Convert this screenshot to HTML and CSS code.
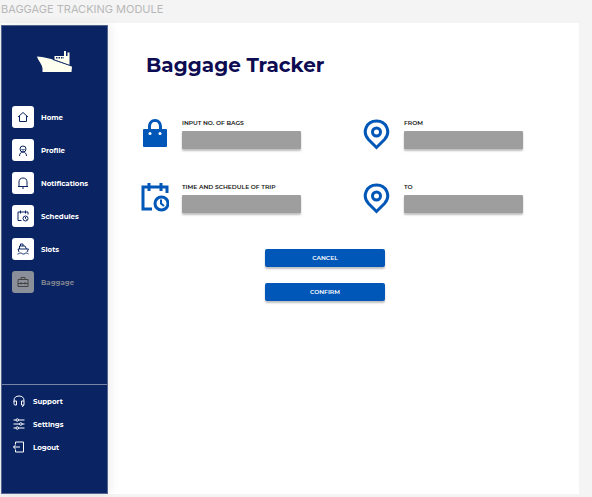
FILE: index.html
```html
<!DOCTYPE html>
<html lang="en">
<head>
<meta charset="utf-8">
<meta name="viewport" content="width=device-width, initial-scale=1">
<title>Baggage Tracker</title>
<link rel="stylesheet" href="styles.css">
</head>
<body>
<header class="frame-label">BAGGAGE TRACKING MODULE</header>
<div class="app">
  <aside class="sidebar">
    <svg class="logo" viewBox="0 0 36 22" aria-hidden="true">
      <path fill="#fffff0" d="M0 5.500C7 6 13 7.500 18 9.500L35 15.500L34.500 21H5.500V17.500C5 13 1 9.500 0 5.500Z"/>
      <path fill="#fffff0" d="M17.500 5H27V0H29V5H30.500V1.500H32.500V14L25 11.300L17.500 8.500Z"/>
      <path stroke="#0a2463" stroke-width="1.400" stroke-dasharray="1.500 1" d="M19 6.800H27"/>
      <path fill="none" stroke="#0a2463" stroke-width=".7" d="M16 8.600L34.500 15"/>
    </svg>
    <nav class="menu" aria-label="Main">
      <a class="item" href="#home"><span class="tile"><svg viewBox="0 0 24 24"><path d="M2 12L12 3L22 12M5 10V21H19V10"/></svg></span>Home</a>
      <a class="item" href="#profile"><span class="tile"><svg viewBox="0 0 24 24"><circle cx="12" cy="10" r="6"/><path d="M5 24C5 19 8 16 12 16S19 19 19 24M9 11Q12 13 15 11"/></svg></span>Profile</a>
      <a class="item" href="#notifications"><span class="tile"><svg viewBox="0 0 24 24"><path d="M2 19H22M4 19V10C4 5 7 2 12 2S20 5 20 10V19M10 22H14"/></svg></span>Notifications</a>
      <a class="item" href="#schedules"><span class="tile"><svg viewBox="0 0 24 24"><path d="M9 21H2V4H22V9M7 1V7M17 1V7"/><circle cx="17" cy="17" r="5"/><path d="M17 14V17L19 19"/></svg></span>Schedules</a>
      <a class="item" href="#slots"><span class="tile"><svg viewBox="0 0 24 24"><path d="M4 18L2 12H23L20 18M5 12V6H16L19 12M7 6V2H12V6M1 22C4 22 4 20 7 20S10 22 13 22S16 20 19 20S21 22 23 22"/></svg></span>Slots</a>
      <a class="item current" href="#baggage" aria-current="page"><span class="tile"><svg viewBox="0 0 24 24"><path d="M2 7H22V21H2ZM8 7V3H16V7M2 15H22M8 12V17M16 12V17"/></svg></span>Baggage</a>
    </nav>
    <nav class="menu-secondary" aria-label="Account">
      <a class="link" href="#support"><svg viewBox="0 0 24 24"><path d="M2 13V11C2 5 6 2 12 2S22 5 22 11V19Q22 22 18 23M2 12H7V20H4Q2 20 2 17V12M22 12H17V20H22"/></svg>Support</a>
      <a class="link" href="#settings"><svg viewBox="0 0 24 24"><path d="M1 4H6M11 4H23M1 12H13M18 12H23M1 20H6M11 20H23"/><circle cx="8.500" cy="4" r="2.500"/><circle cx="15.500" cy="12" r="2.500"/><circle cx="8.500" cy="20" r="2.500"/></svg>Settings</a>
      <a class="link" href="#logout"><svg viewBox="0 0 24 24"><path d="M5 7V2H21V22H5V17M14 12H1M5 8L1 12L5 16"/></svg>Logout</a>
    </nav>
  </aside>
  <main class="content">
    <h1>Baggage Tracker</h1>
    <form class="tracker">
      <div class="field">
        <svg viewBox="0 0 28 32" aria-hidden="true"><path fill="#0057b8" fill-rule="evenodd" d="M3 11H7V9C7 4 10 1 14 1S21 4 21 9V11H25Q26 11 26 12V28Q26 29 25 29H3Q2 29 2 28V12Q2 11 3 11ZM10 11H18V9C18 6 17 4 14 4S10 6 10 9Z"/><circle cx="9" cy="15.500" r="1.500" fill="#fff"/><circle cx="19" cy="15.500" r="1.500" fill="#fff"/></svg>
        <div class="entry"><label for="bags">INPUT NO. OF BAGS</label><input id="bags" type="text"></div>
      </div>
      <div class="field">
        <svg viewBox="0 0 28 32" aria-hidden="true"><g class="outline"><path d="M13.500 29.500L5.500 21.500C-1 14.500 3 3 13.500 3S28 14.500 21.500 21.500Z"/><circle cx="13.500" cy="14" r="4"/></g></svg>
        <div class="entry"><label for="from">FROM</label><input id="from" type="text"></div>
      </div>
      <div class="field">
        <svg viewBox="0 0 28 32" aria-hidden="true"><g class="outline"><path d="M11 27H2V5H26V11M8 1V9M20 1V9"/><circle cx="20.500" cy="21.500" r="6.500"/><path class="hands" d="M20 17.500V21.500L23 24"/></g></svg>
        <div class="entry"><label for="trip">TIME AND SCHEDULE OF TRIP</label><input id="trip" type="text"></div>
      </div>
      <div class="field">
        <svg viewBox="0 0 28 32" aria-hidden="true"><g class="outline"><path d="M13.500 29.500L5.500 21.500C-1 14.500 3 3 13.500 3S28 14.500 21.500 21.500Z"/><circle cx="13.500" cy="14" r="4"/></g></svg>
        <div class="entry"><label for="to">TO</label><input id="to" type="text"></div>
      </div>
      <div class="actions">
        <button type="reset">CANCEL</button>
        <button type="submit">CONFIRM</button>
      </div>
    </form>
  </main>
</div>
</body>
</html>
```
FILE: styles.css
```css
* { box-sizing: border-box; }

body {
  margin: 0;
  min-height: 100vh;
  display: flex;
  flex-direction: column;
  background: #f4f4f4;
  font-family: Montserrat, Inter, sans-serif;
}

.frame-label {
  padding: 1px 1px 6px;
  font: 11px/16px Inter, sans-serif;
  color: #b8b8b8;
}

.app {
  flex: 1;
  display: grid;
  grid-template-columns: 107px 1fr;
  margin: 0 13px 3px 1px;
  padding-top: 2px;
  background: #fff;
}

.sidebar {
  display: flex;
  flex-direction: column;
  background: #0a2463;
  border: 1px solid #53658f;
  box-shadow: 2px 0 10px rgba(0, 0, 0, 0.08);
}

.logo {
  width: 36px;
  height: 22px;
  margin: 25px 0 33px 35px;
}

.menu {
  display: flex;
  flex-direction: column;
  gap: 11px;
  padding-left: 10px;
}

.item,
.link {
  display: flex;
  align-items: center;
  color: #fff;
  font-size: 7px;
  font-weight: 700;
  text-decoration: none;
}

.item { gap: 7px; }

.tile {
  display: grid;
  place-items: center;
  width: 22px;
  height: 22px;
  border-radius: 3px;
  background: #fff;
  color: #0a2463;
}

.item svg,
.link svg {
  width: 12px;
  height: 12px;
  fill: none;
  stroke: currentColor;
  stroke-width: 2;
}

.current { color: #7d828f; }

.current .tile {
  background: #8b8f99;
  color: #444;
}

.menu-secondary {
  display: flex;
  flex-direction: column;
  gap: 11px;
  margin-top: auto;
  padding: 10px 0 40px 11px;
  border-top: 1px solid #7885a5;
}

.link {
  gap: 8px;
  height: 12px;
}

.content { padding: 24px 56px 24px 33px; }

h1 {
  margin: 0 0 37px 5px;
  font-size: 20px;
  line-height: 32px;
  font-weight: 700;
  color: #0d0b52;
}

.tracker {
  display: grid;
  grid-template-columns: 1fr 1fr;
  gap: 32px 62px;
}

.field {
  display: flex;
  gap: 13px;
}

.field svg {
  flex: none;
  width: 28px;
  height: 32px;
}

.outline {
  fill: none;
  stroke: #0057b8;
  stroke-width: 3;
}

.hands { stroke-width: 2; }

.entry {
  flex: 1;
  display: flex;
  flex-direction: column;
  gap: 3px;
}

label {
  font-size: 6px;
  line-height: 10px;
  font-weight: 600;
  color: #111;
  white-space: nowrap;
}

input {
  width: 100%;
  height: 18px;
  padding: 0 4px;
  border: 0;
  border-radius: 1px;
  background: #9e9e9e;
  box-shadow: 0 2px 2px rgba(0, 0, 0, 0.25);
  font: 8px Inter, sans-serif;
}

.actions {
  grid-column: 1 / -1;
  display: flex;
  flex-direction: column;
  align-items: center;
  gap: 16px;
  padding: 3px 14px 0 0;
}

button {
  width: 120px;
  height: 18px;
  padding: 0;
  border: 0;
  border-radius: 2px;
  background: #0057b8;
  box-shadow: 0 2px 2px rgba(0, 0, 0, 0.25);
  color: #fff;
  font: 600 6px Montserrat, Inter, sans-serif;
}
```
